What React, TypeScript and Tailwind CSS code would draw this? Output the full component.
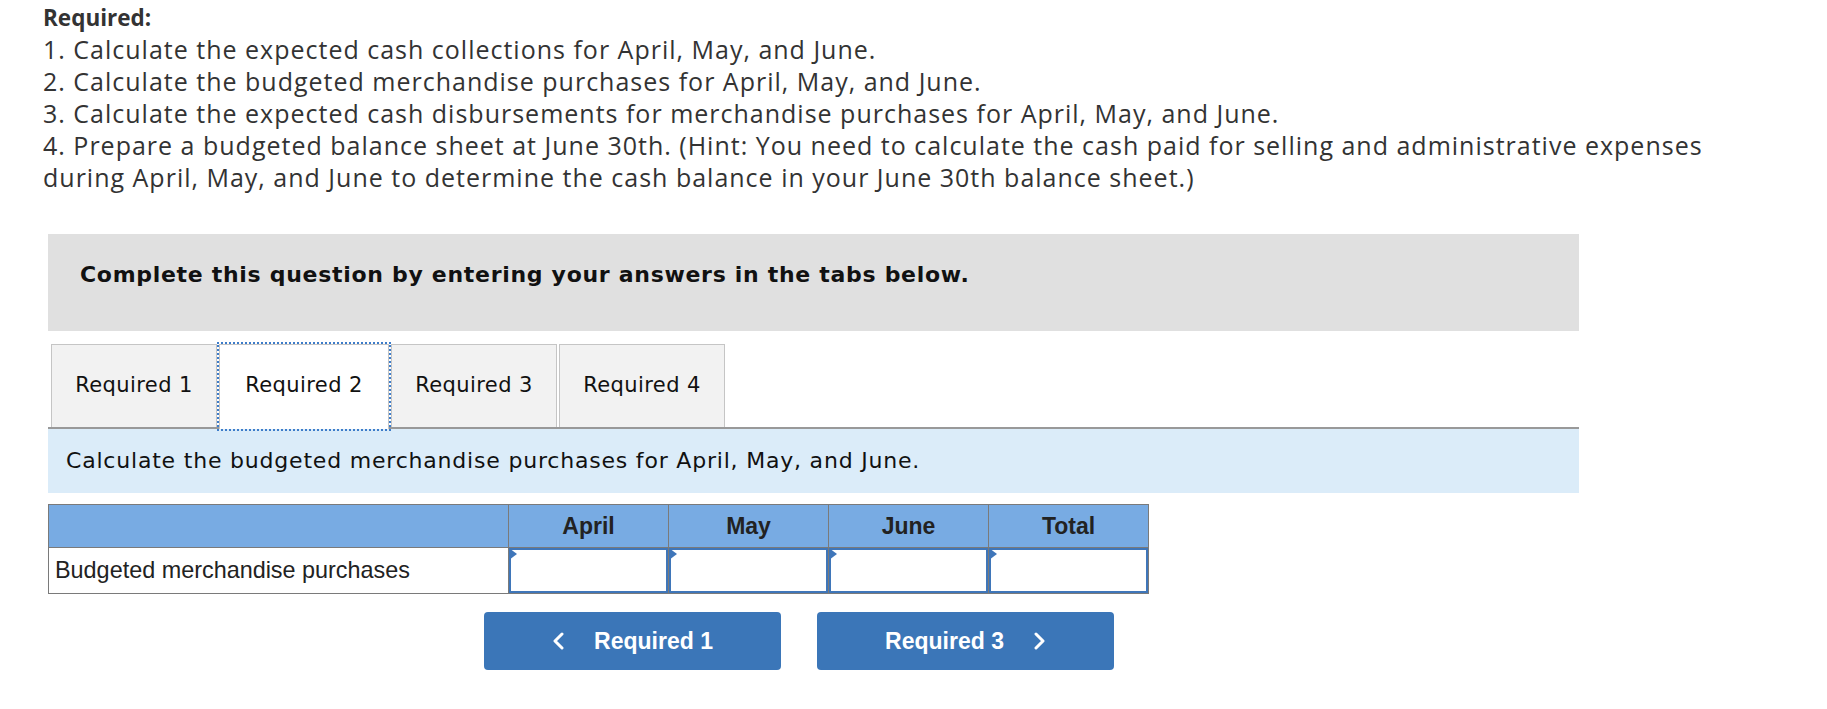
import React from "react";

const lines = [
  "1. Calculate the expected cash collections for April, May, and June.",
  "2. Calculate the budgeted merchandise purchases for April, May, and June.",
  "3. Calculate the expected cash disbursements for merchandise purchases for April, May, and June.",
  "4. Prepare a budgeted balance sheet at June 30th. (Hint: You need to calculate the cash paid for selling and administrative expenses",
  "during April, May, and June to determine the cash balance in your June 30th balance sheet.)",
];

const tabs = ["Required 1", "Required 2", "Required 3", "Required 4"];
const months = ["April", "May", "June", "Total"];

function InputCell() {
  return (
    <td className="h-[46px] p-0 border border-[#7a7a7a]">
      <div className="relative h-[45px] border-2 border-[#3f76b9] bg-white">
        <svg className="absolute left-[-2px] top-[-2px]" width="8" height="12" viewBox="0 0 8 12">
          <polygon points="0,0 8,6 0,12" fill="#3f76b9" />
        </svg>
      </div>
    </td>
  );
}

function Chevron({ dir }: { dir: "left" | "right" }) {
  return (
    <svg width="12" height="18" viewBox="0 0 12 18" fill="none">
      <polyline
        points={dir === "left" ? "10,2 3,9 10,16" : "2,2 9,9 2,16"}
        stroke="white"
        strokeWidth="3"
        strokeLinecap="round"
        strokeLinejoin="round"
      />
    </svg>
  );
}

export default function App() {
  return (
    <div className="w-[1827px] h-[709px] overflow-hidden bg-white">
      <div className="pl-[43px] pt-[1px] font-['Open_Sans',sans-serif] text-[25px] leading-[32px] tracking-[1px] text-[#333]">
        <p className="pt-[2px] text-[22.5px] leading-[30px] font-bold tracking-normal">Required:</p>
        {lines.map((l) => (
          <p key={l} className="whitespace-nowrap">
            {l}
          </p>
        ))}
      </div>

      <div className="ml-[48px] w-[1531px] mt-[41px]">
        <div className="h-[97px] bg-[#e0e0e0] pl-[32px] pt-[29px] font-['DejaVu_Sans',sans-serif] text-[22px] leading-[24px] tracking-[0.7px] font-bold text-[#111]">
          Complete this question by entering your answers in the tabs below.
        </div>

        <div className="mt-[13px] flex items-end gap-[2px] pl-[3px] border-b-2 border-[#999] font-['DejaVu_Sans',sans-serif] text-[21px] tracking-[0.4px] text-[#111]">
          {tabs.map((t, i) =>
            i === 1 ? (
              <div
                key={t}
                className="relative -mb-[2px] flex h-[85px] w-[170px] items-center justify-center border border-b-0 border-[#c5c5c5] bg-white pb-[2px] outline-2 outline-dotted outline-[#3d7cc9]"
              >
                {t}
              </div>
            ) : (
              <div
                key={t}
                className="flex h-[83px] w-[166px] items-center justify-center border border-b-0 border-[#c5c5c5] bg-[#f2f2f2]"
              >
                {t}
              </div>
            )
          )}
        </div>

        <div className="h-[64px] bg-[#dbecf9] pl-[18px] pt-[20px] font-['DejaVu_Sans',sans-serif] text-[22px] leading-[24px] tracking-[0.8px] text-[#111]">
          Calculate the budgeted merchandise purchases for April, May, and June.
        </div>

        <table className="mt-[11px] border-collapse font-['Liberation_Sans',Arial,sans-serif] text-[23px] text-[#222]">
          <thead>
            <tr className="h-[43px] bg-[#78abe3]">
              <th className="w-[460px] border border-[#7a7a7a]"></th>
              {months.map((m) => (
                <th key={m} className="w-[160px] border border-[#7a7a7a] text-center font-bold">
                  {m}
                </th>
              ))}
            </tr>
          </thead>
          <tbody>
            <tr>
              <td className="h-[46px] border border-[#7a7a7a] pl-[6px] text-left text-[23.4px]">Budgeted merchandise purchases</td>
              {months.map((m) => (
                <InputCell key={m} />
              ))}
            </tr>
          </tbody>
        </table>

        <div className="mt-[18px] flex gap-[36px] pl-[436px] font-['Liberation_Sans',Arial,sans-serif] text-[23px] font-bold text-white">
          <button className="flex h-[58px] w-[297px] items-center justify-center gap-[30px] rounded-[4px] bg-[#3b76b8]">
            <Chevron dir="left" />
            <span>Required 1</span>
          </button>
          <button className="flex h-[58px] w-[297px] items-center justify-center gap-[30px] rounded-[4px] bg-[#3b76b8]">
            <span>Required 3</span>
            <Chevron dir="right" />
          </button>
        </div>
      </div>
    </div>
  );
}
